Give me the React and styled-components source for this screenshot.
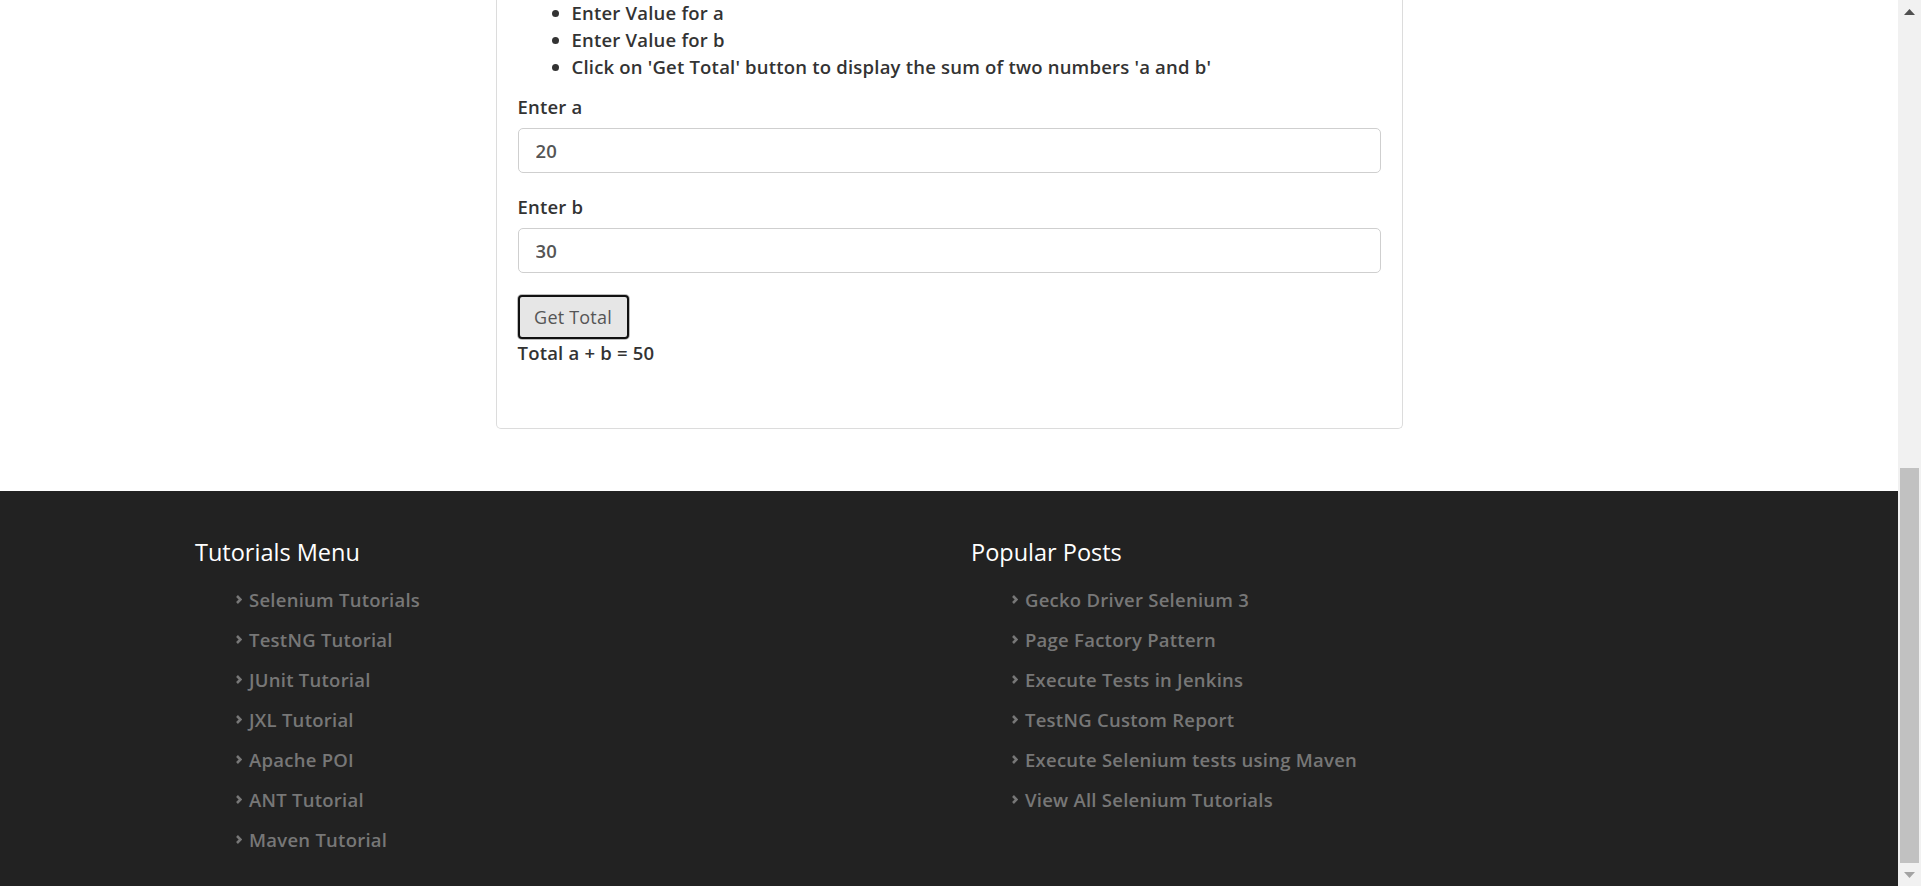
import React from "react";
import styled, { createGlobalStyle } from "styled-components";

const Global = createGlobalStyle`
  html, body { margin: 0; padding: 0; height: 100%; overflow: hidden; }
  body { font-family: "Open Sans", "Lato", sans-serif; color: #333; background: #fff; }
  * { box-sizing: border-box; }
`;

const Frame = styled.div`
  display: flex;
  height: 886px;
  width: 100%;
  overflow: hidden;
`;

const Main = styled.div`
  flex: 1;
  display: flex;
  flex-direction: column;
  min-width: 0;
`;

const Content = styled.section`
  display: flex;
  justify-content: center;
  padding-bottom: 62px;
`;

const Card = styled.div`
  width: 907px;
  border: 1px solid #dcdcdc;
  border-top: none;
  border-radius: 0 0 5px 5px;
  padding: 0 21px 62px 21px;
  font-size: 18.5px;
  letter-spacing: 0.2px;
  font-weight: 600;
`;

const Steps = styled.ul`
  margin: -1px 0 0 0;
  padding-left: 54px;
  line-height: 27px;
`;

const Group = styled.div`
  display: flex;
  flex-direction: column;
  margin-top: ${(p) => p.$top}px;
`;

const Label = styled.label`
  line-height: 27px;
  margin-bottom: 8px;
`;

const Input = styled.input`
  height: 45px;
  width: 100%;
  border: 1px solid #cfcfcf;
  border-radius: 5px;
  padding: 0 17px;
  font-family: inherit;
  font-size: 18.5px;
  letter-spacing: 0.2px;
  font-weight: 600;
  color: #555;
  outline: none;
`;

const Button = styled.button`
  margin-top: 22px;
  align-self: flex-start;
  width: 111px;
  height: 44px;
  background: #e6e6e6;
  border: 2px solid #111;
  border-radius: 4px;
  box-shadow: 0 0 0 1px #bdbdbd;
  font-family: inherit;
  font-size: 18px;
  letter-spacing: 0.2px;
  font-weight: 400;
  color: #555;
  cursor: pointer;
`;

const Result = styled.div`
  line-height: 27px;
`;

const Footer = styled.footer`
  flex: 1;
  background: #222;
  display: grid;
  grid-template-columns: 776px 776px;
  padding: 47px 0 0 195px;
  align-content: start;
`;

const Column = styled.div`
  display: flex;
  flex-direction: column;
`;

const Heading = styled.h3`
  margin: 0 0 13px 0;
  font-size: 23.5px;
  font-weight: 400;
  color: #fff;
  line-height: 28px;
`;

const Links = styled.ul`
  list-style: none;
  margin: 0;
  padding: 0 0 0 41px;
  display: flex;
  flex-direction: column;
`;

const LinkItem = styled.li`
  display: flex;
  align-items: center;
  gap: 7px;
  height: 40px;
  font-size: 18.5px;
  letter-spacing: 0.25px;
  font-weight: 600;
  color: #777;
`;

const Chevron = () => (
  <svg width="6" height="9" viewBox="0 0 6 9">
    <path d="M1 1 L4.5 4.5 L1 8" stroke="#777" strokeWidth="2.6" fill="none" />
  </svg>
);

const Scrollbar = styled.div`
  width: 23px;
  flex: none;
  background: #f1f1f1;
  display: flex;
  flex-direction: column;
  align-items: center;
  padding: 0 2px;
`;

const Arrow = styled.div`
  height: 23px;
  display: flex;
  align-items: center;
  justify-content: center;
`;

const Spacer = styled.div`
  flex: 1;
`;

const Thumb = styled.div`
  width: 19px;
  height: 395px;
  background: #c1c1c1;
`;

const tutorials = [
  "Selenium Tutorials",
  "TestNG Tutorial",
  "JUnit Tutorial",
  "JXL Tutorial",
  "Apache POI",
  "ANT Tutorial",
  "Maven Tutorial",
];

const posts = [
  "Gecko Driver Selenium 3",
  "Page Factory Pattern",
  "Execute Tests in Jenkins",
  "TestNG Custom Report",
  "Execute Selenium tests using Maven",
  "View All Selenium Tutorials",
];

export default function App() {
  return (
    <>
      <Global />
      <Frame>
        <Main>
          <Content>
            <Card>
              <Steps>
                <li>Enter Value for a</li>
                <li>Enter Value for b</li>
                <li>Click on 'Get Total' button to display the sum of two numbers 'a and b'</li>
              </Steps>
              <Group $top={13}>
                <Label>Enter a</Label>
                <Input defaultValue="20" />
              </Group>
              <Group $top={20}>
                <Label>Enter b</Label>
                <Input defaultValue="30" />
              </Group>
              <Group $top={0}>
                <Button>Get Total</Button>
                <Result>Total a + b = 50</Result>
              </Group>
            </Card>
          </Content>
          <Footer>
            <Column>
              <Heading>Tutorials Menu</Heading>
              <Links>
                {tutorials.map((t) => (
                  <LinkItem key={t}>
                    <Chevron />
                    {t}
                  </LinkItem>
                ))}
              </Links>
            </Column>
            <Column>
              <Heading>Popular Posts</Heading>
              <Links>
                {posts.map((t) => (
                  <LinkItem key={t}>
                    <Chevron />
                    {t}
                  </LinkItem>
                ))}
              </Links>
            </Column>
          </Footer>
        </Main>
        <Scrollbar>
          <Arrow>
            <svg width="11" height="6" viewBox="0 0 11 6">
              <path d="M0 6 L5.5 0 L11 6 Z" fill="#505050" />
            </svg>
          </Arrow>
          <Spacer />
          <Thumb />
          <Arrow>
            <svg width="11" height="6" viewBox="0 0 11 6">
              <path d="M0 0 L5.5 6 L11 0 Z" fill="#a3a3a3" />
            </svg>
          </Arrow>
        </Scrollbar>
      </Frame>
    </>
  );
}
